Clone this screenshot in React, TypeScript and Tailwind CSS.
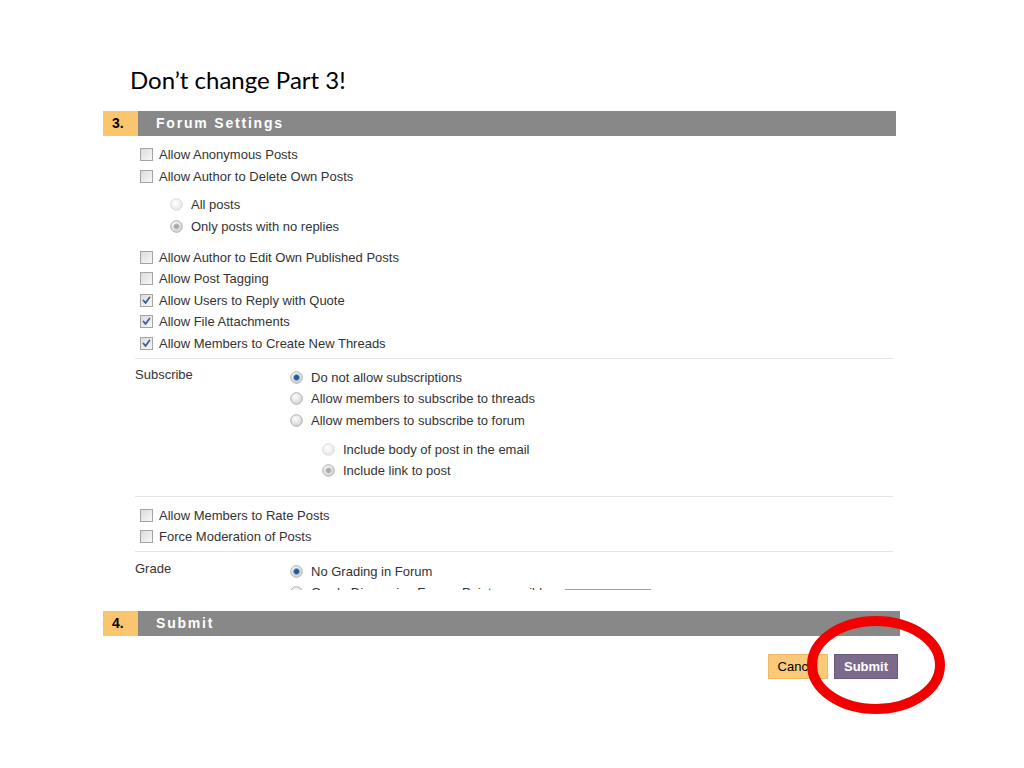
import React from "react";

const arial = { fontFamily: '"Liberation Sans", Arial, sans-serif' };

function Checkbox({ checked = false }: { checked?: boolean }) {
  return (
    <span className="relative inline-block w-[13px] h-[13px] shrink-0 border border-[#a4a4a4] bg-gradient-to-br from-[#dcdcdc] to-[#f7f7f7]">
      {checked && (
        <svg viewBox="0 0 13 13" className="absolute -left-[1px] -top-[1px] w-[13px] h-[13px]">
          <path d="M3.5 6.5 L5.5 9 L9.5 3.5" fill="none" stroke="#3e5f9c" strokeWidth="1.8" strokeLinecap="round" strokeLinejoin="round" />
        </svg>
      )}
    </span>
  );
}

function Radio({ kind }: { kind: "off" | "offLight" | "on" | "onGray" }) {
  const light = kind === "offLight";
  return (
    <svg viewBox="0 0 13 13" className="w-[13px] h-[13px] shrink-0">
      <defs>
        <radialGradient id={`g-${kind}`} cx="40%" cy="35%" r="70%">
          <stop offset="0%" stopColor="#ffffff" />
          <stop offset="100%" stopColor={light ? "#e6e6e6" : "#cfcfcf"} />
        </radialGradient>
      </defs>
      <circle cx="6.5" cy="6.5" r="5.8" fill={`url(#g-${kind})`} stroke={light ? "#d6d6d6" : "#a9a9a9"} strokeWidth="0.9" />
      {kind === "on" && <circle cx="6.5" cy="6.5" r="3" fill="#1f5a93" stroke="#7fb0d8" strokeWidth="0.8" />}
      {kind === "onGray" && <circle cx="6.5" cy="6.5" r="2.8" fill="#a8a8a8" stroke="#cfcfcf" strokeWidth="0.8" />}
    </svg>
  );
}

function CheckRow({ label, checked }: { label: string; checked?: boolean }) {
  return (
    <div className="flex items-center h-[21.5px] gap-[6px] pl-[5px]">
      <Checkbox checked={checked} />
      <span>{label}</span>
    </div>
  );
}

function RadioRow({ label, kind }: { label: string; kind: "off" | "offLight" | "on" | "onGray" }) {
  return (
    <div className="flex items-center h-[21.5px] gap-[8px]">
      <Radio kind={kind} />
      <span>{label}</span>
    </div>
  );
}

function SectionHeader({ num, title }: { num: string; title: string }) {
  return (
    <div className="flex h-[25px]">
      <div className="w-[35px] bg-[#fbc56e] flex items-center pl-[9px] font-bold text-[14px] text-black" style={arial}>
        {num}
      </div>
      <div className="flex-1 bg-[#888888] flex items-center pl-[18px] font-bold text-[14px] text-white tracking-[1.8px]" style={arial}>
        {title}
      </div>
    </div>
  );
}

export default function App() {
  return (
    <div className="relative w-[1024px] h-[768px] bg-white overflow-hidden">
      <div className="pt-[64px] pl-[130px] h-[111px] text-[24px] leading-[32px] text-black" style={{ fontFamily: 'Lato, "Open Sans", sans-serif' }}>
        Don’t change Part 3!
      </div>

      <div className="ml-[103px] w-[793px]">
        <SectionHeader num="3." title="Forum Settings" />
        <div className="h-[454px] overflow-hidden pl-[32px] pr-[3px] text-[13px] text-[#333333]" style={arial}>
          <div className="pt-[8px]">
            <CheckRow label="Allow Anonymous Posts" />
            <CheckRow label="Allow Author to Delete Own Posts" />
            <div className="pl-[35px] mt-[7px]">
              <RadioRow label="All posts" kind="offLight" />
              <RadioRow label="Only posts with no replies" kind="onGray" />
            </div>
            <div className="mt-[9.5px]">
              <CheckRow label="Allow Author to Edit Own Published Posts" />
              <CheckRow label="Allow Post Tagging" />
              <CheckRow label="Allow Users to Reply with Quote" checked />
              <CheckRow label="Allow File Attachments" checked />
              <CheckRow label="Allow Members to Create New Threads" checked />
            </div>
          </div>
          <div className="mt-[3.5px] border-t border-[#e6e6e6]" />
          <div className="flex pt-[8px] pb-[14px]">
            <div className="w-[155px] -mt-[3px] leading-[21.5px]">Subscribe</div>
            <div>
              <RadioRow label="Do not allow subscriptions" kind="on" />
              <RadioRow label="Allow members to subscribe to threads" kind="off" />
              <RadioRow label="Allow members to subscribe to forum" kind="off" />
              <div className="pl-[32px] mt-[7.5px]">
                <RadioRow label="Include body of post in the email" kind="offLight" />
                <RadioRow label="Include link to post" kind="onGray" />
              </div>
            </div>
          </div>
          <div className="border-t border-[#e6e6e6]" />
          <div className="pt-[8px] pb-[3px]">
            <CheckRow label="Allow Members to Rate Posts" />
            <CheckRow label="Force Moderation of Posts" />
          </div>
          <div className="border-t border-[#e6e6e6]" />
          <div className="flex pt-[9px]">
            <div className="w-[155px] -mt-[3px] leading-[21.5px]">Grade</div>
            <div>
              <RadioRow label="No Grading in Forum" kind="on" />
              <div className="flex items-center h-[21.5px] gap-[8px]">
                <Radio kind="off" />
                <span>Grade Discussion Forum: Points possible:</span>
                <span className="ml-[4px] mt-[14px] inline-block w-[86px] h-[22px] border border-[#a0a0a0]" />
              </div>
            </div>
          </div>
        </div>
      </div>

      <div className="ml-[103px] w-[797px] mt-[21px]">
        <SectionHeader num="4." title="Submit" />
      </div>

      <div className="flex justify-end gap-[6px] pr-[126px] mt-[18px] text-[13px]" style={arial}>
        <button className="h-[25px] px-[9px] bg-[#fbc97a] border border-[#f0b860] text-black">Cancel</button>
        <button className="h-[25px] w-[64px] bg-[#7c6a8c] border border-[#6a5a7a] text-white font-bold">Submit</button>
      </div>

      <svg className="absolute left-[800px] top-[610px] w-[152px] h-[112px]" viewBox="0 0 152 112">
        <ellipse cx="76" cy="55" rx="64" ry="44" fill="none" stroke="#f20000" strokeWidth="10" />
      </svg>
    </div>
  );
}
